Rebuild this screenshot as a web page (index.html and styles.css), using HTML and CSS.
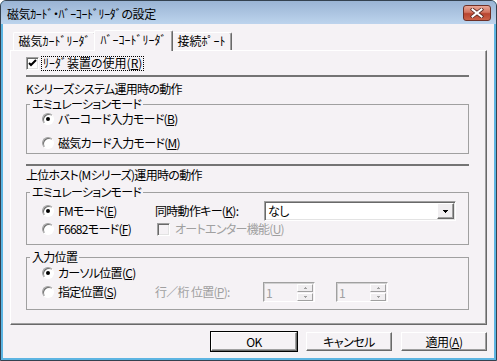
FILE: index.html
```html
<!DOCTYPE html>
<html lang="ja">
<head>
    <meta charset="UTF-8">
    <title>磁気ｶｰﾄﾞ・ﾊﾞｰｺｰﾄﾞﾘｰﾀﾞの設定</title>
    <link rel="stylesheet" href="styles.css">
</head>
<body>

    <!-- ダイアログ本体 -->
    <div class="window">
        <div class="titlebar">
            <span class="title">磁気ｶｰﾄﾞ・ﾊﾞｰｺｰﾄﾞﾘｰﾀﾞの設定</span>
            <div class="close-btn">
                <svg width="14" height="10" viewBox="0 0 14 10">
                    <path d="M2.5 1.5 L11.5 8.5 M11.5 1.5 L2.5 8.5" stroke="#5a2a24" stroke-width="3.6" stroke-linecap="square"/>
                    <path d="M2.5 1.5 L11.5 8.5 M11.5 1.5 L2.5 8.5" stroke="#fff" stroke-width="2" stroke-linecap="square"/>
                </svg>
            </div>
        </div>

        <div class="client">
            <!-- タブ -->
            <div class="tabs">
                <div class="tab tab-card">磁気ｶｰﾄﾞﾘｰﾀﾞ</div>
                <div class="tab tab-barcode active">ﾊﾞｰｺｰﾄﾞﾘｰﾀﾞ</div>
                <div class="tab tab-port">接続ﾎﾟｰﾄ</div>
            </div>

            <div class="pane">
                <div class="check-row">
                    <span class="checkbox">
                        <svg width="11" height="11" viewBox="0 0 11 11"><path d="M2 5 L4 7 L9 2" fill="none" stroke="#000" stroke-width="2"/></svg>
                    </span>
                    <span class="focus-label">ﾘｰﾀﾞ装置の使用(<u>R</u>)</span>
                </div>

                <div class="sep"></div>
                <div class="section-title">Kシリーズシステム運用時の動作</div>

                <fieldset class="group group-k">
                    <legend>エミュレーションモード</legend>
                    <div class="group-body">
                        <div class="row"><span class="radio on"></span>バーコード入力モード(<u>B</u>)</div>
                        <div class="row row-k2"><span class="radio"></span>磁気カード入力モード(<u>M</u>)</div>
                    </div>
                </fieldset>

                <div class="sep sep-m"></div>
                <div class="section-title section-m">上位ホスト(Mシリーズ)運用時の動作</div>

                <fieldset class="group group-m">
                    <legend>エミュレーションモード</legend>
                    <div class="group-body">
                        <div class="row row-tall">
                            <span class="col1"><span class="radio on"></span>FMモード(<u>E</u>)</span>
                            <span class="field-label">同時動作キー(<u>K</u>):</span>
                            <div class="combo">
                                <span>なし</span>
                                <span class="combo-btn">
                                    <svg width="5" height="3" viewBox="0 0 5 3" shape-rendering="crispEdges"><path d="M0 0h5v1h-1v1h-1v1h-1v-1h-1v-1h-1z" fill="#000"/></svg>
                                </span>
                            </div>
                        </div>
                        <div class="row row-m2">
                            <span class="col1"><span class="radio"></span>F6682モード(<u>F</u>)</span>
                            <span class="checkbox disabled"></span>
                            <span class="disabled-text">オートエンター機能(<u>U</u>)</span>
                        </div>
                    </div>
                </fieldset>

                <fieldset class="group group-pos">
                    <legend>入力位置</legend>
                    <div class="group-body">
                        <div class="row"><span class="radio on"></span>カーソル位置(<u>C</u>)</div>
                        <div class="row row-tall row-pos2">
                            <span class="col1"><span class="radio"></span>指定位置(<u>S</u>)</span>
                            <span class="field-label pos-label disabled-text">行／桁 位置(<u>P</u>):</span>
                            <div class="spin">
                                <span class="spin-value">1</span>
                                <span class="spin-btns">
                                    <span class="spin-btn"><svg width="3" height="2" viewBox="0 0 3 2" shape-rendering="crispEdges"><path d="M1 0h1v1h1v1h-3v-1h1z" fill="#a0a0a0"/></svg></span>
                                    <span class="spin-btn"><svg width="3" height="2" viewBox="0 0 3 2" shape-rendering="crispEdges"><path d="M0 0h3v1h-1v1h-1v-1h-1z" fill="#a0a0a0"/></svg></span>
                                </span>
                            </div>
                            <div class="spin spin-2">
                                <span class="spin-value">1</span>
                                <span class="spin-btns">
                                    <span class="spin-btn"><svg width="3" height="2" viewBox="0 0 3 2" shape-rendering="crispEdges"><path d="M1 0h1v1h1v1h-3v-1h1z" fill="#a0a0a0"/></svg></span>
                                    <span class="spin-btn"><svg width="3" height="2" viewBox="0 0 3 2" shape-rendering="crispEdges"><path d="M0 0h3v1h-1v1h-1v-1h-1z" fill="#a0a0a0"/></svg></span>
                                </span>
                            </div>
                        </div>
                    </div>
                </fieldset>
            </div>

            <!-- ボタン -->
            <div class="buttons">
                <div class="btn btn-default">OK</div>
                <div class="btn">キャンセル</div>
                <div class="btn">適用(<u>A</u>)</div>
            </div>
        </div>
    </div>

</body>
</html>
```

FILE: styles.css
```css
* {
    box-sizing: border-box;
}

body {
    margin: 0;
    font-family: "Noto Sans CJK JP", "Noto Sans", sans-serif;
    font-size: 12px;
    line-height: 14px;
    color: #000;
    font-feature-settings: "palt";
    background: #fff;
}

u {
    text-decoration: underline;
    text-underline-offset: 1px;
}

/* ウィンドウ枠 */
.window {
    width: 497px;
    height: 361px;
    display: flex;
    flex-direction: column;
    border: 1px solid #34414f;
    border-radius: 6px 6px 0 0;
    background: #5db5e2;
    overflow: hidden;
}

.titlebar {
    height: 23px;
    flex: none;
    display: flex;
    align-items: center;
    padding: 0 5px 0 6px;
    background: linear-gradient(#9ab4d4, #bdd4ed);
}

.title {
    flex: 1;
    padding-top: 2px;
    letter-spacing: -0.4px;
}

.close-btn {
    width: 28px;
    height: 16px;
    margin-top: 1px;
    border: 1px solid #6e3027;
    border-radius: 3px;
    background: linear-gradient(#e9a898, #d2735f 45%, #b8442f 55%, #cc6248);
    display: flex;
    align-items: center;
    justify-content: center;
}

.client {
    flex: 1;
    margin: 0 2px 2px;
    background: #f5f2f5;
    padding: 6px 7px 0 7px;
}

/* タブ */
.tabs {
    display: flex;
    align-items: flex-end;
    height: 20px;
    padding-left: 3px;
}

.tab {
    height: 18px;
    border: 1px solid #fff;
    border-right-color: #696969;
    border-bottom: none;
    border-radius: 2px 2px 0 0;
    box-shadow: inset -1px 0 0 #a0a0a0;
    text-align: center;
    padding-top: 1px;
    white-space: nowrap;
}

.tab-card {
    width: 83px;
}

.tab-barcode {
    width: 75px;
}

.tab-port {
    width: 61px;
}

.tab.active {
    width: 79px;
    height: 21px;
    margin: 0 -2px -1px;
    padding-top: 2px;
    position: relative;
    z-index: 1;
    background: #f5f2f5;
}

.pane {
    height: 275px;
    border: 1px solid #fff;
    border-right-color: #696969;
    border-bottom-color: #696969;
    box-shadow: inset -1px -1px 0 #a0a0a0;
    padding: 6px 17px 0 15px;
    letter-spacing: -0.7px;
}

/* チェックボックス */
.check-row {
    display: flex;
    align-items: center;
    height: 13px;
    letter-spacing: 0;
}

.checkbox {
    width: 13px;
    height: 13px;
    flex: none;
    border: 1px solid;
    border-color: #a0a0a0 #fff #fff #a0a0a0;
    box-shadow: inset 1px 1px 0 #696969, inset -1px -1px 0 #e3e3e3;
    background: #fff;
    margin-right: 3px;
    display: flex;
}

.checkbox.disabled {
    background: #f5f2f5;
    margin: 0 5px 0 2px;
}

.focus-label {
    height: 13px;
    line-height: 12px;
    padding: 0 1px;
    outline: 1px dotted #000;
}

.sep {
    height: 2px;
    margin-top: 5px;
    background: #747474;
}

.sep-m {
    margin-top: 10px;
}

.section-title {
    margin-top: 5px;
    height: 14px;
}

.section-m {
    margin-top: 2px;
}

/* グループボックス */
.group {
    margin: 1px 0 0;
    padding: 0;
    border: 1px solid #a0a0a0;
    min-width: 0;
}

.group legend {
    margin-left: 3px;
    padding: 0 2px;
    height: 14px;
    line-height: 14px;
}

.group-body {
    padding: 1px 0 3px 15px;
}

.group-m {
    margin-top: 3px;
}

.group-m .group-body {
    padding: 2px 0 8px 15px;
}

.group-pos {
    margin-top: 5px;
}

.group-pos .group-body {
    padding: 2px 0 7px 15px;
}

.row {
    display: flex;
    align-items: center;
    height: 14px;
    white-space: nowrap;
}

.row-k2 {
    margin-top: 10px;
}

.row-tall {
    height: 20px;
}

.row-m2 {
    margin-top: 1px;
}

.row-pos2 {
    margin-top: 2px;
}

.col1 {
    width: 113px;
    display: flex;
    align-items: center;
}

.radio {
    width: 12px;
    height: 12px;
    flex: none;
    border-radius: 50%;
    border: 1px solid;
    border-color: #a0a0a0 #fff #fff #a0a0a0;
    box-shadow: inset 1px 1px 0 #6f6f6f;
    background: #fff;
    margin-right: 4px;
}

.radio.on::after {
    content: "";
    display: block;
    width: 4px;
    height: 4px;
    margin: 3px;
    border-radius: 50%;
    background: #000;
}

.field-label {
    width: 109px;
}

.pos-label {
    width: 108px;
}

.disabled-text {
    color: #a0a0a0;
}

/* コンボボックス */
.combo {
    width: 192px;
    height: 20px;
    border: 1px solid;
    border-color: #a0a0a0 #fff #fff #a0a0a0;
    box-shadow: inset 1px 1px 0 #696969, inset -1px -1px 0 #e3e3e3;
    background: #fff;
    display: flex;
    align-items: center;
    justify-content: space-between;
    padding: 0 1px 0 3px;
}

.combo-btn {
    width: 17px;
    height: 16px;
    border: 1px solid;
    border-color: #fff #696969 #696969 #fff;
    box-shadow: inset -1px -1px 0 #a0a0a0;
    background: #f0eef0;
    display: flex;
    align-items: center;
    justify-content: center;
}

/* スピンボックス */
.spin {
    width: 52px;
    height: 20px;
    border: 1px solid;
    border-color: #a0a0a0 #fff #fff #a0a0a0;
    box-shadow: inset 1px 1px 0 #d0d0d0;
    background: #f5f2f5;
    display: flex;
    justify-content: space-between;
    padding: 1px 1px 0 2px;
}

.spin-2 {
    margin-left: 21px;
}

.spin-value {
    color: #a0a0a0;
    line-height: 17px;
}

.spin-btns {
    display: flex;
    flex-direction: column;
    gap: 1px;
}

.spin-btn {
    width: 16px;
    height: 8px;
    border: 1px solid;
    border-color: #fff #a0a0a0 #a0a0a0 #fff;
    background: #f0eef0;
    display: flex;
    align-items: center;
    justify-content: center;
}

/* ボタン */
.buttons {
    display: flex;
    justify-content: flex-end;
    gap: 9px;
    margin-top: 7px;
    letter-spacing: -0.5px;
}

.btn {
    width: 86px;
    height: 19px;
    border: 1px solid;
    border-color: #fff #696969 #696969 #fff;
    box-shadow: inset -1px -1px 0 #a0a0a0;
    background: #f5f2f5;
    text-align: center;
    line-height: 17px;
}

.btn-default {
    outline: 1px solid #000;
}
```
